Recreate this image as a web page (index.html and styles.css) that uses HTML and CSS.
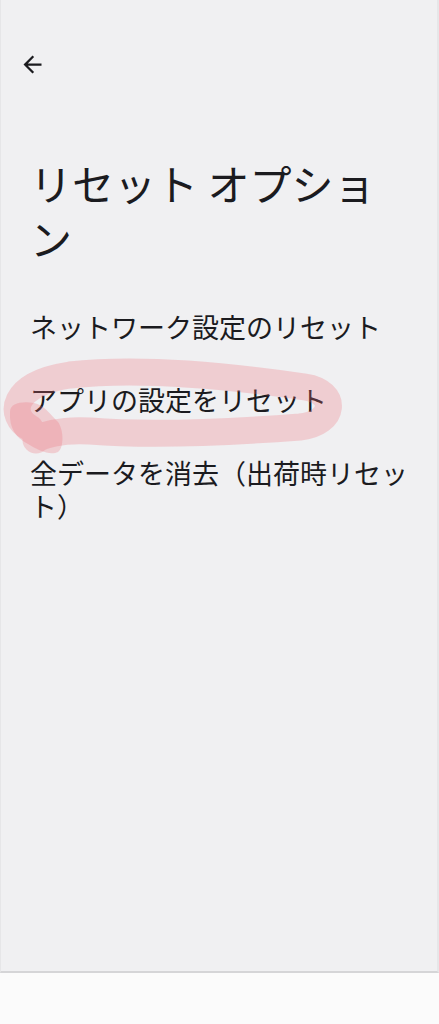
FILE: index.html
```html
<!DOCTYPE html>
<html lang="ja">
<head>
    <meta charset="UTF-8">
    <meta name="viewport" content="width=device-width, initial-scale=1.0">
    <title>リセット オプション</title>
    <link rel="stylesheet" href="styles.css">
</head>
<body>

    <div class="tela">
        <div class="barra-topo">
            <button class="voltar" aria-label="戻る">
                <svg width="27" height="27" viewBox="0 0 24 24">
                    <path d="M20 11H7.83l5.59-5.59L12 4l-8 8 8 8 1.41-1.41L7.83 13H20v-2z" fill="#1b1b1f"/>
                </svg>
            </button>
        </div>

        <div class="conteudo">
            <h1 class="titulo">リセット オプション</h1>

            <ul class="opcoes">
                <li>ネットワーク設定のリセット</li>
                <li>アプリの設定をリセット</li>
                <li>全データを消去（出荷時リセット）</li>
            </ul>
        </div>

        <svg class="marca" width="360" height="120" viewBox="0 350 360 120">
            <path d="M30 428 C8 416 10 384 70 375 C150 366 250 379 305 387 C338 392 336 423 300 427 C220 433 140 435 90 431 C60 429 40 436 36 440"
                  fill="none" stroke="rgba(236,110,122,0.27)" stroke-width="27" stroke-linecap="round"/>
            <path d="M10 412 C10 403 22 401 34 403 C44 405 50 414 58 422 C64 430 64 448 58 452 C50 456 38 450 28 444 C16 438 9 428 10 412 Z"
                  fill="rgba(236,110,122,0.27)"/>
        </svg>
    </div>

    <div class="rodape"></div>

</body>
</html>
```

FILE: styles.css
```css
body {
    margin: 0;
    background-color: #fbfbfb;
    font-family: "Noto Sans CJK JP", "Noto Sans", sans-serif;
    color: #1b1b1f;
}
.tela {
    position: relative;
    height: 973px;
    box-sizing: border-box; /* bordas entram na altura */
    background-color: #f0f0f2;
    border-left: 1px solid #e6e6e8;
    border-right: 2px solid #e6e6e8;
    border-bottom: 2px solid #d5d5d7;
}
.barra-topo {
    padding: 51px 0 0 18px;
    height: 27px;
}
.voltar {
    display: block;
    padding: 0;
    border: none;
    background: none;
    width: 27px;
    height: 27px;
}
.conteudo {
    padding: 77px 26px 0 29px;
}
.titulo {
    margin: 0 0 25px 0;
    font-size: 42px;
    font-weight: 400;
    line-height: 55px;
}
.opcoes {
    list-style: none;
    margin: 0;
    padding: 0;
}
.opcoes li {
    padding: 20px 0;
    font-size: 27px;
    line-height: 33px;
}
/* sublinhado rosa desenhado por cima */
.marca {
    position: absolute;
    left: -1px;
    top: 350px;
    pointer-events: none;
}
.rodape {
    height: 51px;
}
```
